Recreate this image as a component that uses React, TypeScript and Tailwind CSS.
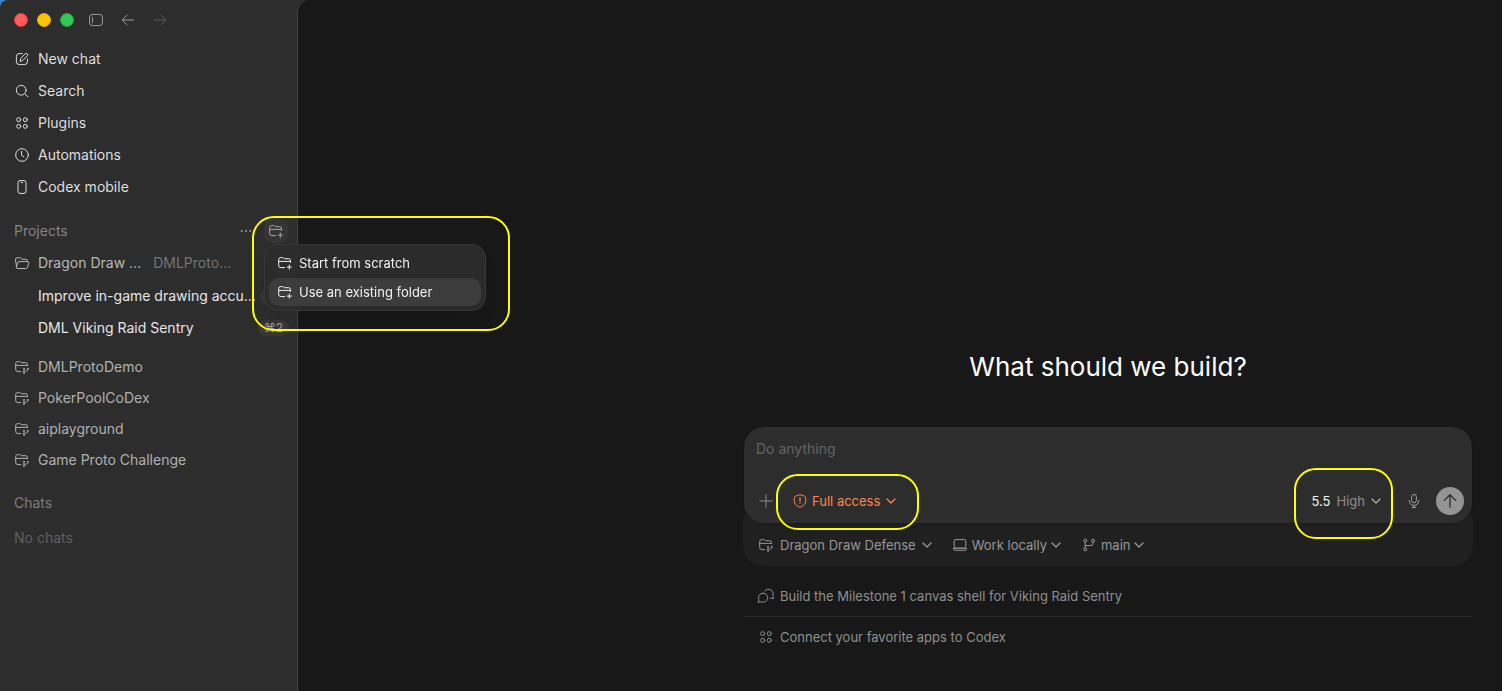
import type { ReactNode } from "react";

type IconProps = { className?: string };

function Svg({ className = "size-4", children }: IconProps & { children: ReactNode }) {
  return (
    <svg
      viewBox="0 0 16 16"
      className={`shrink-0 ${className}`}
      fill="none"
      stroke="currentColor"
      strokeWidth="1"
      strokeLinecap="round"
      strokeLinejoin="round"
      aria-hidden="true"
    >
      {children}
    </svg>
  );
}

const PanelIcon = () => (
  <Svg>
    <rect x="1.6" y="2.4" width="12.8" height="11.2" rx="2.6" />
    <path d="M4.6 5.2v5.6" />
  </Svg>
);

const BackIcon = () => (
  <Svg>
    <path d="M13.6 8H2.4M7 3.2 2.2 8 7 12.8" />
  </Svg>
);

const ForwardIcon = () => (
  <Svg>
    <path d="M2.4 8h11.2M9 3.2 13.8 8 9 12.8" />
  </Svg>
);

const ComposeIcon = () => (
  <Svg>
    <path d="M8.2 2.6H5.2a2.8 2.8 0 0 0-2.8 2.8v5.4a2.8 2.8 0 0 0 2.8 2.8h5.4a2.8 2.8 0 0 0 2.8-2.8V8" />
    <path d="M11.3 2.7a1.5 1.5 0 0 1 2.1 2.1L8.6 9.6l-2.6.9.7-2.7z" />
  </Svg>
);

const SearchIcon = () => (
  <Svg>
    <circle cx="7.2" cy="7.2" r="4.9" />
    <path d="m10.8 10.8 3 3" />
  </Svg>
);

const AppsIcon = () => (
  <Svg>
    <circle cx="4.7" cy="4.7" r="2" />
    <circle cx="11.3" cy="4.7" r="2" />
    <circle cx="4.7" cy="11.3" r="2" />
    <circle cx="11.3" cy="11.3" r="2" />
  </Svg>
);

const ClockIcon = () => (
  <Svg>
    <circle cx="8" cy="8" r="6.3" />
    <path d="M7.6 4.4v3.9l2.2 1.4" />
  </Svg>
);

const PhoneIcon = () => (
  <Svg>
    <rect x="4" y="1.6" width="8" height="12.8" rx="2" />
    <path d="M7.3 3.6h1.4" />
  </Svg>
);

const OpenFolderIcon = () => (
  <Svg>
    <path d="M2.6 12.2 1.5 5A1.9 1.9 0 0 1 3.4 2.8h2.3c.6 0 1 .2 1.4.6l.7.8h3.8a1.7 1.7 0 0 1 1.7 1.7v.6" />
    <path d="M5.3 6.6h8.2a1.2 1.2 0 0 1 1.2 1.6l-1.1 4a1.9 1.9 0 0 1-1.8 1.3H3.6a1.3 1.3 0 0 1-1.2-1.7l1.3-4.1a1.6 1.6 0 0 1 1.6-1.1z" />
  </Svg>
);

const FolderPlusIcon = () => (
  <Svg>
    <path d="M7.6 12.6H3.9a2.2 2.2 0 0 1-2.2-2.2V4.6a2 2 0 0 1 2-2h1.8c.5 0 .9.2 1.2.5l.7.6h4.2a1.9 1.9 0 0 1 1.9 1.9v1.8" />
    <path d="M1.9 6.4h11.3M12.3 10v4.2M10.2 12.1h4.2" />
  </Svg>
);

const FolderBranchIcon = () => (
  <Svg>
    <path d="M6.8 12.6H3.9a2.2 2.2 0 0 1-2.2-2.2V4.6a2 2 0 0 1 2-2h1.8c.5 0 .9.2 1.2.5l.7.6h4.2a1.9 1.9 0 0 1 1.9 1.9v1" />
    <path d="M1.9 6.4h11.4" />
    <g strokeWidth="0.8">
      <circle cx="9.9" cy="9.9" r="0.6" />
      <circle cx="13.7" cy="9.9" r="0.6" />
      <circle cx="9.9" cy="13.9" r="0.6" />
      <path d="M9.9 10.6v2.6M9.9 12.2h2.4a1.4 1.4 0 0 0 1.4-1.4" />
    </g>
  </Svg>
);

const DotsIcon = () => (
  <Svg>
    <g fill="currentColor" stroke="none">
      <circle cx="3.7" cy="8" r="0.9" />
      <circle cx="8" cy="8" r="0.9" />
      <circle cx="12.3" cy="8" r="0.9" />
    </g>
  </Svg>
);

const PlusIcon = () => (
  <Svg>
    <path d="M8 1.8v12.4M1.8 8h12.4" />
  </Svg>
);

const ShieldIcon = () => (
  <Svg>
    <path d="M7.3 1.8a2 2 0 0 1 1.4 0l3.7 1.3a1.9 1.9 0 0 1 1.3 1.8v3.3c0 2.6-1.8 4.3-5 5.9a1.7 1.7 0 0 1-1.4 0c-3.2-1.6-5-3.3-5-5.9V4.9a1.9 1.9 0 0 1 1.3-1.8z" />
    <path d="M8 5v3.2M8 10.4v.2" strokeWidth="1.3" />
  </Svg>
);

const ChevronIcon = () => (
  <Svg className="size-2.5">
    <path d="M1.6 4.8 8 11.2l6.4-6.4" strokeWidth="2" />
  </Svg>
);

const MicIcon = () => (
  <Svg>
    <rect x="5.6" y="1.4" width="4.8" height="8.4" rx="2.4" />
    <path d="M3.2 7.6a4.8 4.8 0 0 0 9.6 0M8 12.4v2M6.2 14.4h3.6" />
  </Svg>
);

const SendIcon = () => (
  <Svg>
    <path d="M8 14.2V2M2.4 7.4 8 1.8l5.6 5.6" strokeWidth="1.3" />
  </Svg>
);

const LaptopIcon = () => (
  <Svg>
    <rect x="2.2" y="2.6" width="11.6" height="8.6" rx="1.4" />
    <path d="M1.4 11.2h13.2v.4a1.7 1.7 0 0 1-1.7 1.7H3.1a1.7 1.7 0 0 1-1.7-1.7z" />
  </Svg>
);

const BranchIcon = () => (
  <Svg>
    <circle cx="4.2" cy="3.6" r="1.5" />
    <circle cx="12" cy="3.8" r="1.5" />
    <circle cx="4.2" cy="12.4" r="1.5" />
    <path d="M4.2 5.2v5.6M4.2 8.6h5.6A2.2 2.2 0 0 0 12 6.4V5.4" />
  </Svg>
);

const ChatsIcon = () => (
  <Svg className="size-4 overflow-visible">
    <path d="M5.2 5.2a4.5 4.5 0 1 1-1.8 8.6l-3.2.6.8-2.6a4.5 4.5 0 0 1 4.2-6.6z" />
    <path d="M6.9 2.8a4.7 4.7 0 0 1 8 4.6l.6 3.2-3-.5" />
  </Svg>
);

const NAV = [
  { label: "New chat", icon: <ComposeIcon /> },
  { label: "Search", icon: <SearchIcon /> },
  { label: "Plugins", icon: <AppsIcon /> },
  { label: "Automations", icon: <ClockIcon /> },
  { label: "Codex mobile", icon: <PhoneIcon /> },
];

const THREADS = [
  { label: "Improve in-game drawing accu…", key: "⌘1" },
  { label: "DML Viking Raid Sentry", key: "⌘2" },
];

const PROJECTS = ["DMLProtoDemo", "PokerPoolCoDex", "aiplayground", "Game Proto Challenge"];

const SUGGESTIONS = [
  { label: "Build the Milestone 1 canvas shell for Viking Raid Sentry", icon: <ChatsIcon /> },
  { label: "Connect your favorite apps to Codex", icon: <AppsIcon /> },
];

// yellow marker drawn over the part it wraps
function Marker({ className }: { className: string }) {
  return (
    <span
      className={`pointer-events-none absolute rounded-[22px] border-2 border-[#ffff00] ${className}`}
    />
  );
}

function ProjectMenu() {
  return (
    <div
      role="menu"
      className="absolute top-[25px] left-0 z-10 flex w-[222px] flex-col gap-px rounded-[14px] border border-[#383838] bg-[#2c2c2c]/95 p-1 text-[13px] leading-5 text-[#f2f2f2] shadow-lg backdrop-blur-sm"
    >
      <button role="menuitem" className="flex h-7 items-center gap-1.5 rounded-[10px] px-2">
        <FolderPlusIcon />
        Start from scratch
      </button>
      <button role="menuitem" className="flex h-7 items-center gap-1.5 rounded-[10px] bg-[#3c3c3c] px-2">
        <FolderPlusIcon />
        Use an existing folder
      </button>
    </div>
  );
}

function Sidebar() {
  return (
    <aside className="relative z-10 w-[297px] shrink-0 text-sm">
      <div className="flex h-10 items-center gap-3.5 pl-3.5 text-[#9a9a9a]">
        <div className="flex gap-[9px]">
          <button aria-label="Close" className="size-3.5 rounded-full border border-[#e8383d] bg-[#ff5c60]" />
          <button aria-label="Minimize" className="size-3.5 rounded-full border border-[#e0ac00] bg-[#fdc700]" />
          <button aria-label="Zoom" className="size-3.5 rounded-full border border-[#1fa83a] bg-[#34c759]" />
        </div>
        <div className="flex gap-4">
          <button aria-label="Toggle sidebar">
            <PanelIcon />
          </button>
          <button aria-label="Back">
            <BackIcon />
          </button>
          <button aria-label="Forward" className="text-[#5a5a5a]">
            <ForwardIcon />
          </button>
        </div>
      </div>

      <nav className="mt-[3px] flex flex-col text-[#dedede]">
        {NAV.map((item) => (
          <button key={item.label} className="flex h-8 items-center gap-2 px-3.5">
            {item.icon}
            {item.label}
          </button>
        ))}
      </nav>

      <div className="mt-3 flex h-8 items-center pr-[9px] pl-3.5 text-[#838383]">
        <h2 className="flex-1">Projects</h2>
        <button aria-label="Project options" className="mr-2.5 text-[#a8a8a8]">
          <DotsIcon />
        </button>
        <div className="relative">
          <button
            aria-label="Add project"
            aria-haspopup="menu"
            className="flex size-6 items-center justify-center rounded-lg bg-[#353535] text-[#a8a8a8]"
          >
            <FolderPlusIcon />
          </button>
          <ProjectMenu />
          <Marker className="-top-[3px] -left-3 z-20 h-[115px] w-[258px]" />
        </div>
      </div>

      <button className="flex h-8 items-center gap-2 px-3.5 text-[#b8b8b8]">
        <OpenFolderIcon />
        <span>Dragon Draw …</span>
        <span className="ml-1 text-[#747474]">DMLProto…</span>
      </button>
      <div className="mt-px flex flex-col text-[#e6e6e6]">
        {THREADS.map((t) => (
          <button key={t.key} className="flex h-8 items-center justify-between pr-2 pl-[38px]">
            <span className="whitespace-nowrap">{t.label}</span>
            <kbd className="rounded-full bg-[#373737] px-1.5 font-[Inter,sans-serif] text-xs leading-4 text-[#a0a0a0]">
              {t.key}
            </kbd>
          </button>
        ))}
      </div>

      <div className="mt-[7px] flex flex-col text-[#b0b0b0]">
        {PROJECTS.map((p) => (
          <button key={p} className="flex h-[31px] items-center gap-2 px-3.5">
            <FolderBranchIcon />
            {p}
          </button>
        ))}
      </div>

      <h2 className="mt-3 flex h-8 items-center px-3.5 text-[#7c7c7c]">Chats</h2>
      <p className="mt-[3px] flex h-8 items-center px-3.5 text-[#606060]">No chats</p>
    </aside>
  );
}

function Composer() {
  return (
    <form>
      <div className="relative z-10 mx-px rounded-[20px] bg-[#2d2d2d] p-2 shadow-sm">
        <textarea
          aria-label="Message"
          placeholder="Do anything"
          rows={1}
          className="block h-[52px] w-full resize-none bg-transparent px-1 pt-1 text-sm leading-5 text-white outline-none placeholder:text-[#646464]"
        />
        <div className="flex h-7 items-center text-[13px] leading-5 text-[#8d8d8d]">
          <button type="button" aria-label="Add" className="ml-1.5">
            <PlusIcon />
          </button>
          <button
            type="button"
            aria-haspopup="menu"
            className="relative ml-[18px] flex h-7 items-center gap-1 text-[#ff8549]"
          >
            <ShieldIcon />
            Full access
            <span className="ml-0.5">
              <ChevronIcon />
            </span>
            <Marker className="-top-[13px] -left-4 h-14 w-[143px]" />
          </button>
          <button
            type="button"
            aria-haspopup="menu"
            className="relative ml-auto flex h-7 items-center gap-1"
          >
            <span className="text-[#f4f4f4]">5.5</span>
            <span className="ml-0.5">High</span>
            <span className="ml-0.5 text-[#adadad]">
              <ChevronIcon />
            </span>
            <Marker className="-top-[19px] -right-3 h-[71px] w-[99px]" />
          </button>
          <button type="button" aria-label="Dictate" className="mr-3.5 ml-[25px] text-[#a0a0a0]">
            <MicIcon />
          </button>
          <button
            aria-label="Send"
            className="flex size-7 items-center justify-center rounded-full bg-[#949494] text-[#2d2d2d]"
          >
            <SendIcon />
          </button>
        </div>
      </div>

      <div className="-mt-5 flex gap-5 rounded-[20px] bg-[#202020] px-[15px] pt-5 text-[13px] leading-5 text-[#979797]">
        <button type="button" className="flex h-[43px] items-center gap-1.5">
          <FolderBranchIcon />
          Dragon Draw Defense
          <ChevronIcon />
        </button>
        <button type="button" className="flex h-[43px] items-center gap-1">
          <LaptopIcon />
          Work locally
          <ChevronIcon />
        </button>
        <button type="button" className="flex h-[43px] items-center gap-1">
          <BranchIcon />
          main
          <ChevronIcon />
        </button>
      </div>
    </form>
  );
}

export default function App() {
  return (
    <div className="min-h-screen bg-[#2f86cc] font-[Inter,sans-serif]">
      <div className="flex min-h-screen rounded-tl-lg bg-[#2d2d2d]">
        <Sidebar />
        <main className="flex min-w-0 flex-1 flex-col items-end justify-end rounded-tl-xl border-l border-[#434343] bg-[#181818] pr-[29px] pb-[34px]">
          <div className="w-full max-w-[730px]">
            <h1 className="mb-[42px] text-center text-[26px] leading-9 text-white">What should we build?</h1>
            <Composer />
            <ul className="mx-px mt-2.5 divide-y divide-[#292929] text-[13px] leading-5 text-[#8f8f8f]">
              {SUGGESTIONS.map((s) => (
                <li key={s.label}>
                  <button className="flex h-10 w-full items-center gap-1.5 px-3.5">
                    {s.icon}
                    {s.label}
                  </button>
                </li>
              ))}
            </ul>
          </div>
        </main>
      </div>
    </div>
  );
}
